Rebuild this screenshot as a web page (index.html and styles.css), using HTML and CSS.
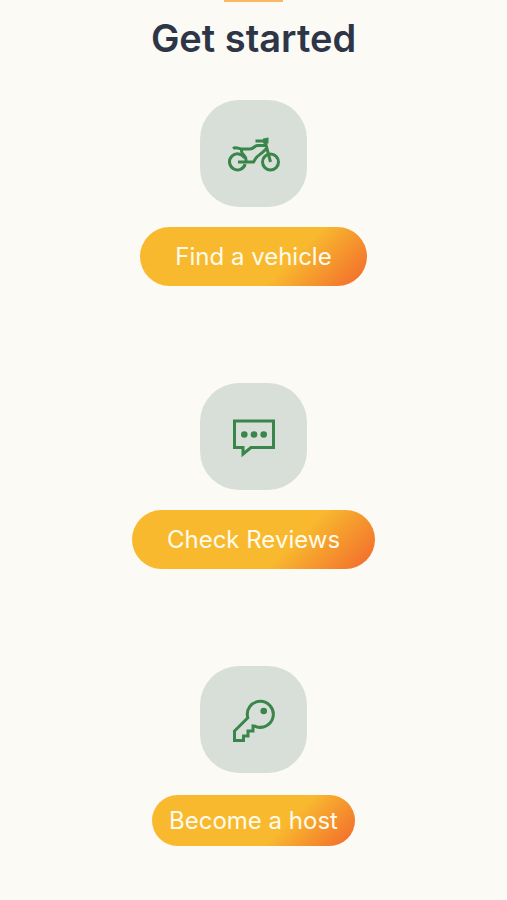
FILE: index.html
```html
<!DOCTYPE html>
<html lang="en">
<head>
<meta charset="utf-8">
<meta name="viewport" content="width=device-width, initial-scale=1">
<title>Get started</title>
<link rel="stylesheet" href="styles.css">
</head>
<body>
<main class="page">
  <div class="accent"></div>
  <h1 class="title">Get started</h1>
  <div class="steps">
    <section class="step">
      <div class="tile">
        <svg class="icon" viewBox="0 0 55 55" aria-hidden="true">
          <path d="M18.500 32A8 8 0 1 0 19.200 38"/>
          <circle cx="44.500" cy="36" r="8"/>
          <path d="M7 22.500C10 20.500 13 23 16.500 23H24C28 23 28 19.500 32 19.500H40"/>
          <path d="M15.500 23V25C15.500 29 20 29 20 34V36"/>
          <path d="M12 36H27.500L30 32C31.500 29.500 35 28.500 40.500 22.500"/>
          <path d="M29.500 15H39L44.500 36"/>
          <path class="solid" d="M37 12.500L42.500 11.500V17.500H37Z"/>
        </svg>
      </div>
      <button class="action" type="button">Find a vehicle</button>
    </section>
    <section class="step">
      <div class="tile">
        <svg class="icon" viewBox="0 0 55 55" aria-hidden="true">
          <path d="M8.500 12H47.500V38.500H25L17 45V38.500H8.500Z"/>
          <circle class="solid" cx="18.300" cy="25.500" r="3.300"/>
          <circle class="solid" cx="28" cy="25.500" r="3.300"/>
          <circle class="solid" cx="37.700" cy="25.500" r="3.300"/>
        </svg>
      </div>
      <button class="action" type="button">Check Reviews</button>
    </section>
    <section class="step step-host">
      <div class="tile">
        <svg class="icon" viewBox="0 0 55 55" aria-hidden="true">
          <path d="M21.800 25.800A13 13 0 1 1 29.300 34.300L27 34V39H22V44H17.500V48.500H8.500V39Z"/>
          <circle class="solid" cx="37.700" cy="19" r="3.300"/>
        </svg>
      </div>
      <button class="action action-compact" type="button">Become a host</button>
    </section>
  </div>
</main>
</body>
</html>
```
FILE: styles.css
```css
* {
  box-sizing: border-box;
}

body {
  margin: 0;
  min-height: 100vh;
  background: #fbfaf5;
  font-family: Inter, "Liberation Sans", sans-serif;
}

.page {
  display: flex;
  flex-direction: column;
  align-items: center;
  padding-bottom: 52px;
}

.accent {
  width: 59px;
  height: 2px;
  background: #f8b864;
}

.title {
  margin: 12px 0 38px;
  color: #2e3547;
  font-size: 38px;
  font-weight: 600;
  line-height: 48px;
}

.steps {
  display: flex;
  flex-direction: column;
  gap: 97px;
}

.step {
  display: flex;
  flex-direction: column;
  align-items: center;
  gap: 20px;
}

.step-host {
  gap: 22px;
}

.tile {
  display: grid;
  place-items: center;
  width: 107px;
  height: 107px;
  border-radius: 39px;
  background: #d8dfd8;
}

.icon {
  width: 55px;
  height: 55px;
  fill: none;
  stroke: #3a854a;
  stroke-width: 3;
}

.icon .solid {
  fill: #3a854a;
  stroke: none;
}

.action {
  padding: 14px 35px;
  border: 0;
  border-radius: 30px;
  background: linear-gradient(135deg, #f8b92f 64%, #f2672c 100%);
  color: #fffbea;
  font: 400 24px/31px Inter, "Liberation Sans", sans-serif;
  cursor: pointer;
}

.action-compact {
  padding: 10px 17px;
}
```
